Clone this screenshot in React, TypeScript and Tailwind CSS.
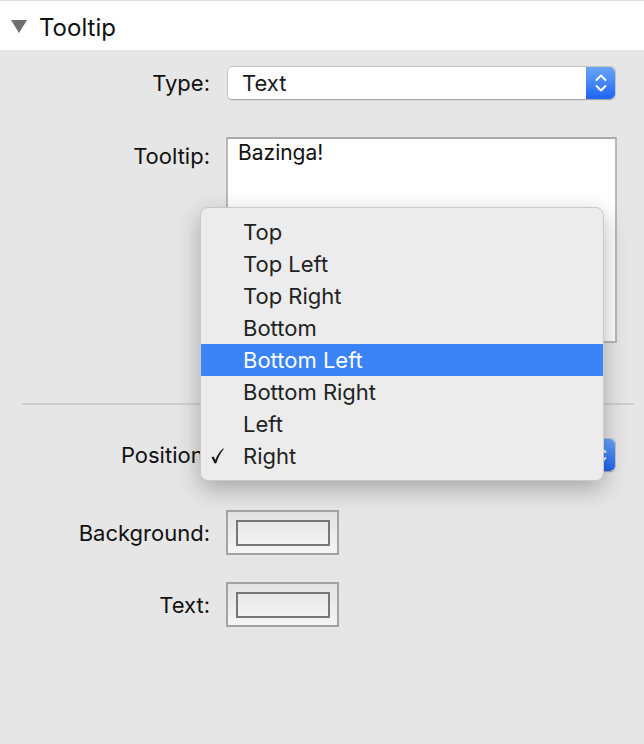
import React from "react";

const font = { fontFamily: "Inter, 'Liberation Sans', sans-serif" };

function Stepper() {
  return (
    <div className="w-[29px] self-stretch flex items-center justify-center rounded-r-[5px] bg-gradient-to-b from-[#6aa5fa] to-[#1d63f2]">
      <svg width="14" height="22" viewBox="0 0 14 22" fill="none" stroke="white" strokeWidth="2" strokeLinecap="round" strokeLinejoin="round">
        <path d="M2.5 8 L7 3.5 L11.5 8" />
        <path d="M2.5 14 L7 18.5 L11.5 14" />
      </svg>
    </div>
  );
}

function Select({ value }: { value: string }) {
  return (
    <div className="flex h-[34px] w-[389px] items-stretch rounded-[5px] border border-[#c4c4c4] border-b-[#a8a8a8] bg-white shadow-[0_1px_0_rgba(0,0,0,0.05)]">
      <div className="flex-1 flex items-center pl-[14px] text-[22px] leading-none text-[#1a1a1a]">{value}</div>
      <Stepper />
    </div>
  );
}

function Swatch() {
  return (
    <div className="flex h-[45px] w-[113px] items-center justify-center border-2 border-[#a3a3a3] bg-gradient-to-b from-[#e3e3e3] to-[#f4f4f4]">
      <div className="h-[26px] w-[94px] border-2 border-[#777777] bg-gradient-to-b from-[#e8e8e8] to-[#f3f3f3]" />
    </div>
  );
}

function Check() {
  return (
    <svg width="13" height="16" viewBox="0 0 13 16" className="absolute left-[10px] top-[8px]">
      <path d="M0.5 9.2 L2.6 8.4 L4.3 12 C6 7.5 8.5 3.5 12.3 0.2 L12.8 0.9 C9.6 4.6 7.3 9 5.3 15.3 L3.6 15.6 Z" fill="#1a1a1a" />
    </svg>
  );
}

const items = ["Top", "Top Left", "Top Right", "Bottom", "Bottom Left", "Bottom Right", "Left", "Right"];

export default function App() {
  return (
    <div style={font} className="relative h-[744px] w-[644px] overflow-hidden bg-[#e6e6e6] text-[#111]">
      <div className="flex h-[50px] items-center border-t border-[#dcdcdc] bg-white pl-[11px]">
        <svg width="16" height="14" viewBox="0 0 16 14" className="mt-[3px]">
          <path d="M0 0 H16 L8 13 Z" fill="#6f6f6f" />
        </svg>
        <span className="ml-[12px] mt-[4px] text-[24px] leading-none text-[#111]">Tooltip</span>
      </div>

      <div className="grid grid-cols-[210px_1fr] gap-x-[17px] pt-[16px]">
        <div className="flex h-[34px] items-center justify-end text-[22px] leading-none">Type:</div>
        <div className="flex h-[34px] items-center">
          <Select value="Text" />
        </div>

        <div className="mt-[37px] flex h-[38px] items-center justify-end text-[22px] leading-none">Tooltip:</div>
        <div className="mt-[37px]">
          <div className="h-[206px] w-[391px] -ml-[1px] border-2 border-[#b9b9b9] border-t-[#a9a9a9] bg-white px-[10px] text-[21px] leading-[28px]">
            Bazinga!
          </div>
        </div>
      </div>

      <div className="ml-[22px] mt-[60px] h-[2px] w-[612px] bg-[#cfcfcf]" />

      <div className="grid grid-cols-[210px_1fr] gap-x-[17px] pt-[33px]">
        <div className="flex h-[34px] items-center justify-end text-[22px] leading-none">Position:</div>
        <div className="flex h-[34px] items-center">
          <Select value="Right" />
        </div>

        <div className="mt-[38px] flex h-[45px] items-center justify-end text-[22px] leading-none">Background:</div>
        <div className="mt-[38px] -ml-[1px]">
          <Swatch />
        </div>

        <div className="mt-[27px] flex h-[45px] items-center justify-end text-[22px] leading-none">Text:</div>
        <div className="mt-[27px] -ml-[1px]">
          <Swatch />
        </div>
      </div>

      <div className="absolute left-[200px] top-[207px] w-[404px] rounded-[8px] border border-[#c9c9c9] bg-[#ececec] py-[8px] shadow-[0_8px_24px_rgba(0,0,0,0.28)]">
        {items.map((it) => {
          const active = it === "Bottom Left";
          return (
            <div
              key={it}
              className={`relative flex h-[32px] items-center pl-[42px] text-[22px] leading-none ${active ? "bg-[#3a84f7] text-white" : "text-[#222]"}`}
            >
              {it === "Right" && <Check />}
              {it}
            </div>
          );
        })}
      </div>
    </div>
  );
}
